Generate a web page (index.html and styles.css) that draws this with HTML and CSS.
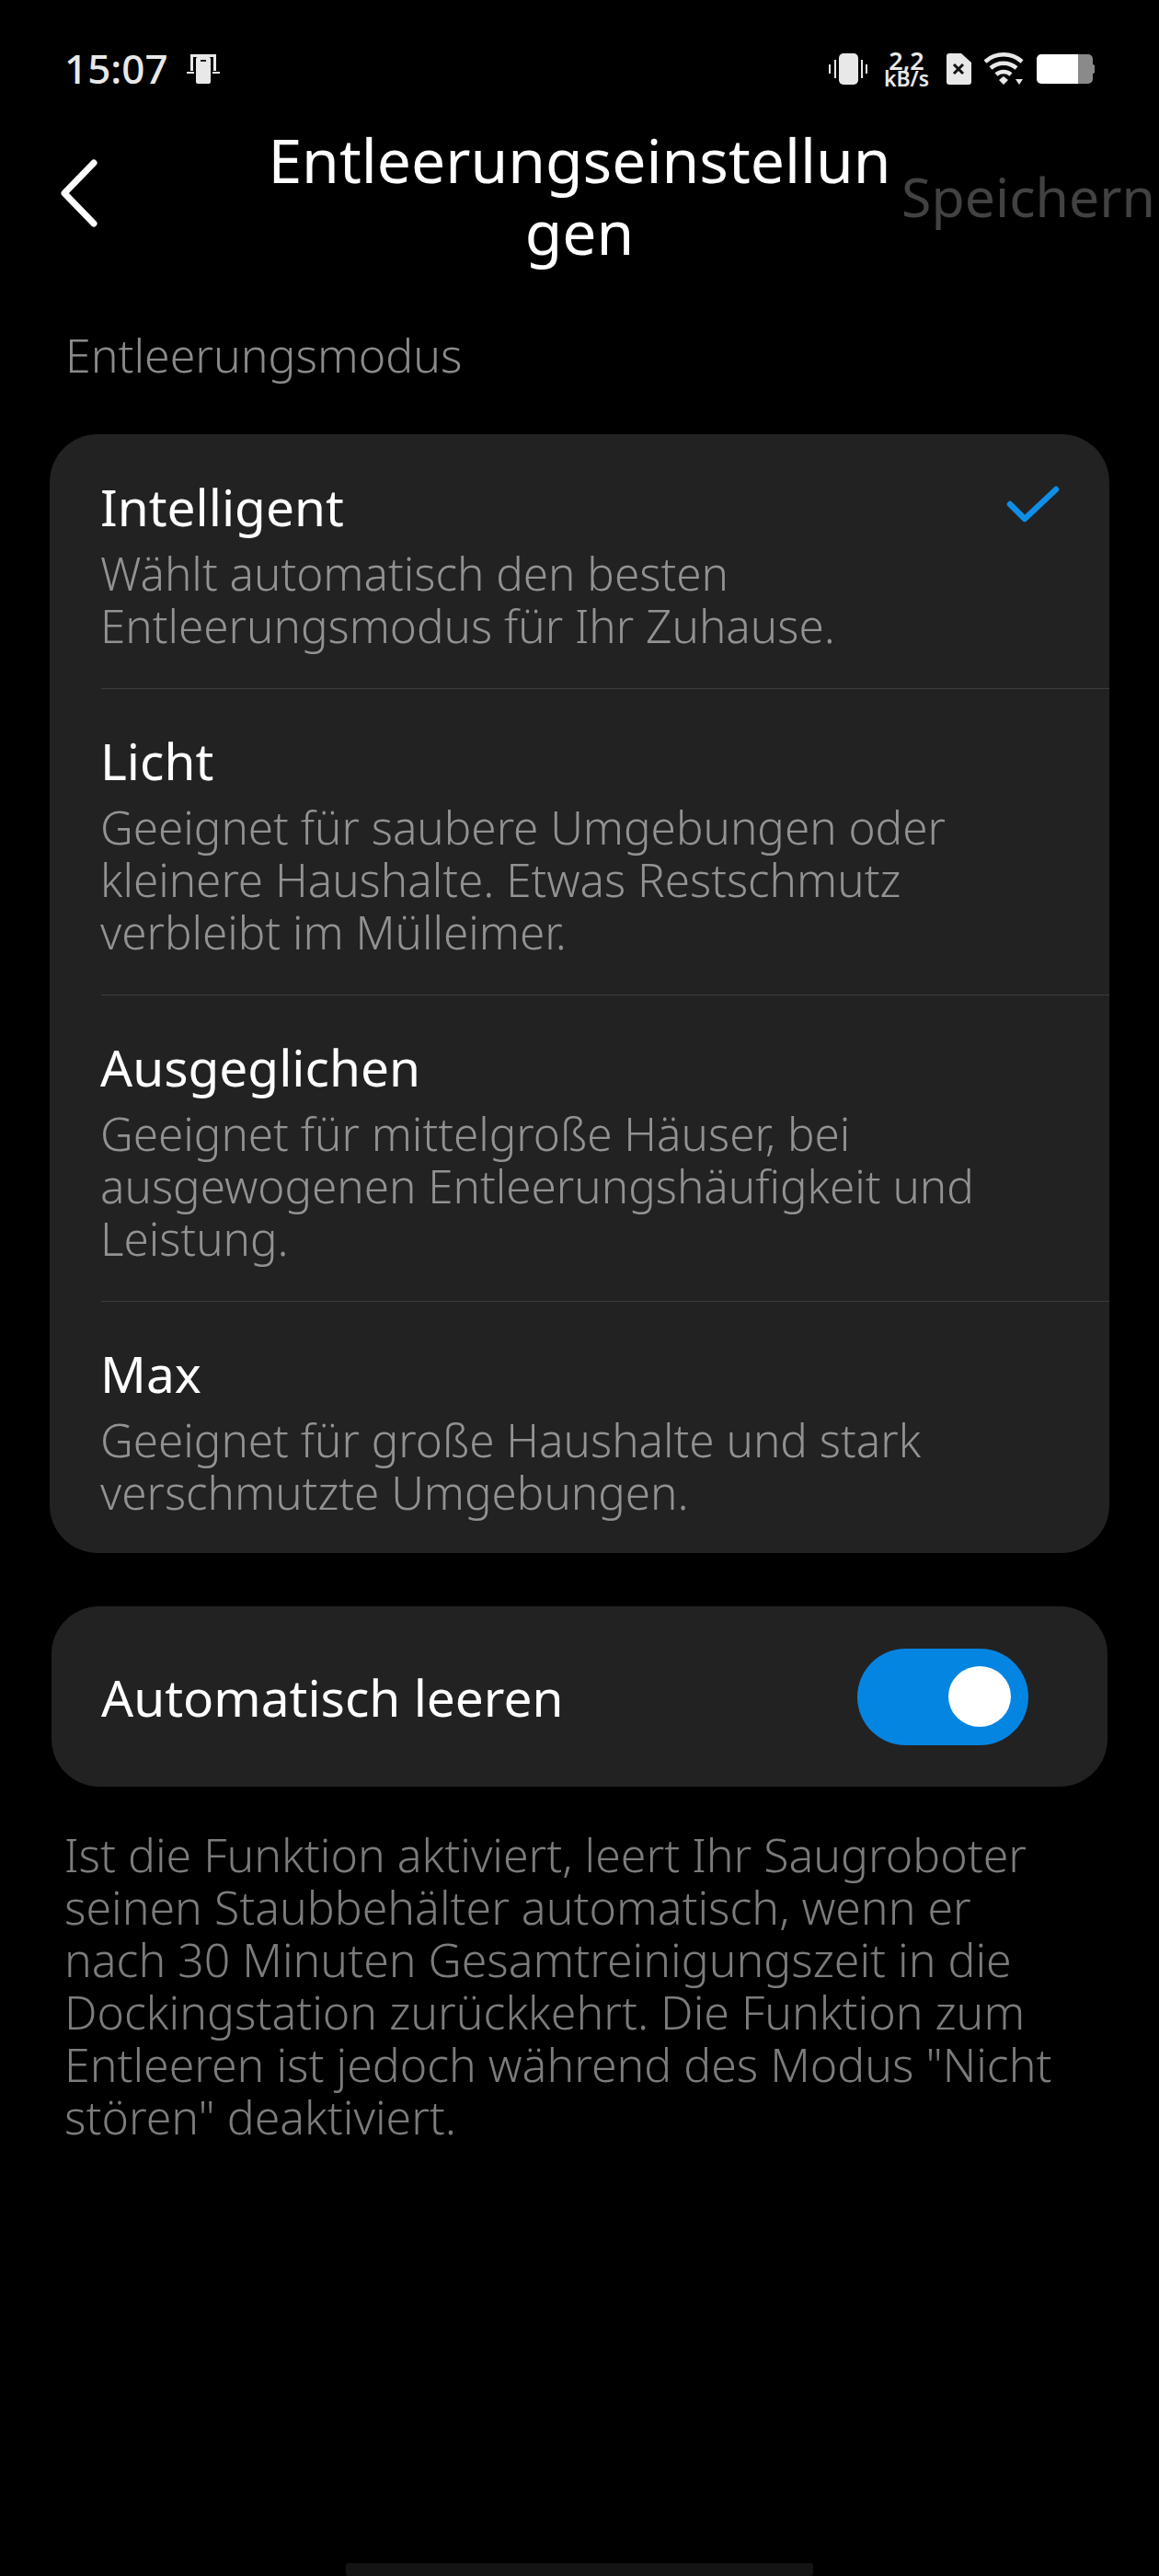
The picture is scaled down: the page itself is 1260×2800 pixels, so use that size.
FILE: index.html
```html
<!DOCTYPE html>
<html lang="de">
<head>
    <meta charset="UTF-8">
    <title>Entleerungseinstellungen</title>
    <link rel="stylesheet" href="styles.css">
</head>
<body>
<div class="status">
    <div class="status-left">
        <span class="time">15:07</span>
        <svg class="ic-cast" width="36" height="34" viewBox="0 0 36 34">
            <path d="M4 2h28v18h-3V5H7v15H4z" fill="#e8e8e8"/>
            <rect x="10" y="5" width="16" height="29" rx="2" fill="#e8e8e8"/>
            <rect x="15" y="8" width="6" height="2" fill="#222"/>
            <rect x="0" y="21" width="8" height="2" fill="#e8e8e8"/>
            <rect x="28" y="21" width="8" height="2" fill="#e8e8e8"/>
        </svg>
    </div>
    <div class="status-right">
        <svg width="42" height="36" viewBox="0 0 42 36">
            <rect x="11" y="1" width="21" height="34" rx="5" fill="#e8e8e8"/>
            <rect x="0" y="13" width="2" height="10" fill="#e8e8e8"/>
            <rect x="6" y="8" width="2" height="20" fill="#e8e8e8"/>
            <rect x="35" y="8" width="2" height="20" fill="#e8e8e8"/>
            <rect x="40" y="13" width="2" height="10" fill="#e8e8e8"/>
        </svg>
        <div class="speed"><span class="speed-num">2,2</span><span class="speed-unit">kB/s</span></div>
        <svg width="28" height="36" viewBox="0 0 28 36">
            <path d="M4 1h13l11 10v21a3 3 0 0 1-3 3H4a3 3 0 0 1-3-3V4a3 3 0 0 1 3-3z" fill="#e8e8e8"/>
            <path d="M9 13l10 10M19 13L9 23" stroke="#111" stroke-width="3"/>
        </svg>
        <svg width="43" height="36" viewBox="0 0 43 36">
            <path d="M1 10a30 30 0 0 1 40 0M7 17a21 21 0 0 1 28 0M13 24a12 12 0 0 1 16 0" fill="none" stroke="#e8e8e8" stroke-width="4.5"/>
            <path d="M16 30l5-4 5 4-5 5z" fill="#e8e8e8"/>
            <path d="M34 29h8l-4 6z" fill="#e8e8e8"/>
        </svg>
        <svg width="63" height="32" viewBox="0 0 63 32">
            <path d="M45 0h11a5 5 0 0 1 5 5v6a3 5 0 0 1 0 10v6a5 5 0 0 1-5 5H45z" fill="#8a8a8a"/>
            <path d="M5 0h40v32H5a5 5 0 0 1-5-5V5a5 5 0 0 1 5-5z" fill="#fff"/>
        </svg>
    </div>
</div>

<div class="header">
    <svg class="back" width="44" height="76" viewBox="0 0 44 76">
        <path d="M38 5L6 38l32 33" fill="none" stroke="#fff" stroke-width="7" stroke-linecap="round" stroke-linejoin="round"/>
    </svg>
    <div class="title">Entleerungseinstellun<br>gen</div>
    <div class="save">Speichern</div>
</div>

<div class="section-label">Entleerungsmodus</div>

<div class="card modes">
    <div class="mode">
        <div class="mode-head">
            <div class="mode-name">Intelligent</div>
            <svg class="check" width="58" height="44" viewBox="0 0 58 44">
                <path d="M4 21l16 16L54 5" fill="none" stroke="#0f8fe6" stroke-width="6.5" stroke-linecap="round" stroke-linejoin="round"/>
            </svg>
        </div>
        <div class="mode-desc">Wählt automatisch den besten<br>Entleerungsmodus für Ihr Zuhause.</div>
    </div>
    <div class="mode">
        <div class="mode-name">Licht</div>
        <div class="mode-desc">Geeignet für saubere Umgebungen oder<br>kleinere Haushalte. Etwas Restschmutz<br>verbleibt im Mülleimer.</div>
    </div>
    <div class="mode">
        <div class="mode-name">Ausgeglichen</div>
        <div class="mode-desc">Geeignet für mittelgroße Häuser, bei<br>ausgewogenen Entleerungshäufigkeit und<br>Leistung.</div>
    </div>
    <div class="mode">
        <div class="mode-name">Max</div>
        <div class="mode-desc">Geeignet für große Haushalte und stark<br>verschmutzte Umgebungen.</div>
    </div>
</div>

<div class="card auto">
    <div class="auto-label">Automatisch leeren</div>
    <div class="switch"><div class="knob"></div></div>
</div>

<div class="note">Ist die Funktion aktiviert, leert Ihr Saugroboter<br>seinen Staubbehälter automatisch, wenn er<br>nach 30 Minuten Gesamtreinigungszeit in die<br>Dockingstation zurückkehrt. Die Funktion zum<br>Entleeren ist jedoch während des Modus "Nicht<br>stören" deaktiviert.</div>

<div class="home-bar"></div>
</body>
</html>
```

FILE: styles.css
```css
* {
    padding: 0;
    margin: 0;
    box-sizing: border-box;
}

html, body {
    background: #000;
}

body {
    width: 1260px;
    height: 2800px;
    overflow: hidden;
    position: relative;
    font-family: "Noto Sans", "Liberation Sans", sans-serif;
    font-weight: 300;
    color: #fff;
}

.status {
    height: 150px;
    padding: 56px 70px 0 70px;
    display: flex;
    justify-content: space-between;
    align-items: flex-start;
}

.status-left {
    display: flex;
    align-items: center;
    gap: 20px;
}

.time {
    font-size: 44px;
    line-height: 36px;
    font-weight: 500;
    color: #e8e8e8;
}

.status-right {
    display: flex;
    align-items: center;
    gap: 14px;
}

.speed {
    width: 49px;
    margin: 0 4px;
    display: flex;
    flex-direction: column;
    align-items: center;
    font-weight: 600;
    color: #e8e8e8;
}

.speed-num {
    font-size: 27px;
    line-height: 20px;
}

.speed-unit {
    font-size: 23px;
    line-height: 18px;
}

.header {
    height: 160px;
    display: flex;
    align-items: center;
    position: relative;
}

.back {
    margin-left: 64px;
    margin-top: -40px;
    flex: none;
}

.title {
    position: absolute;
    left: 270px;
    width: 720px;
    top: -16px;
    text-align: center;
    font-size: 66px;
    line-height: 78px;
    font-weight: 400;
}

.save {
    position: absolute;
    left: 980px;
    top: 24px;
    font-size: 59px;
    line-height: 78px;
    font-weight: 400;
    color: #424242;
    white-space: nowrap;
}

.section-label {
    margin-left: 71px;
    height: 162px;
    padding-top: 42px;
    font-size: 50px;
    line-height: 68px;
    color: #8a8a8a;
}

.card {
    background: #222223;
}

.modes {
    margin: 0 54px;
    border-radius: 52px;
    height: 1216px;
    padding-top: 43px;
}

.mode {
    margin-left: 56px;
    padding-bottom: 40px;
    margin-bottom: 42px;
    border-bottom: 1px solid #3d3d3d;
}

.mode:last-child {
    border-bottom: 0;
}

.mode-head {
    display: flex;
    justify-content: space-between;
    align-items: flex-start;
}

.check {
    margin-right: 54px;
    margin-top: 12px;
}

.mode-name {
    font-size: 55px;
    line-height: 72px;
    margin-bottom: 7px;
    margin-left: -1px;
    font-weight: 400;
}

.mode-desc {
    font-size: 49.4px;
    line-height: 57px;
    margin-left: -1px;
    color: #929292;
}

.auto {
    margin: 58px 56px 0;
    height: 196px;
    border-radius: 52px;
    display: flex;
    align-items: center;
    justify-content: space-between;
    padding: 0 86px 0 54px;
}

.auto-label {
    font-size: 55px;
    font-weight: 400;
}

.switch {
    width: 186px;
    height: 105px;
    border-radius: 53px;
    background: #0585e2;
    display: flex;
    align-items: center;
    justify-content: flex-end;
    padding-right: 19px;
}

.knob {
    width: 68px;
    height: 66px;
    border-radius: 50%;
    background: #fff;
}

.note {
    margin: 46px 0 0 70px;
    font-size: 50px;
    line-height: 57px;
    color: #7c7c7c;
}

.home-bar {
    position: absolute;
    left: 376px;
    top: 2786px;
    width: 508px;
    height: 14px;
    border-radius: 3px;
    background: #141414;
}
```
